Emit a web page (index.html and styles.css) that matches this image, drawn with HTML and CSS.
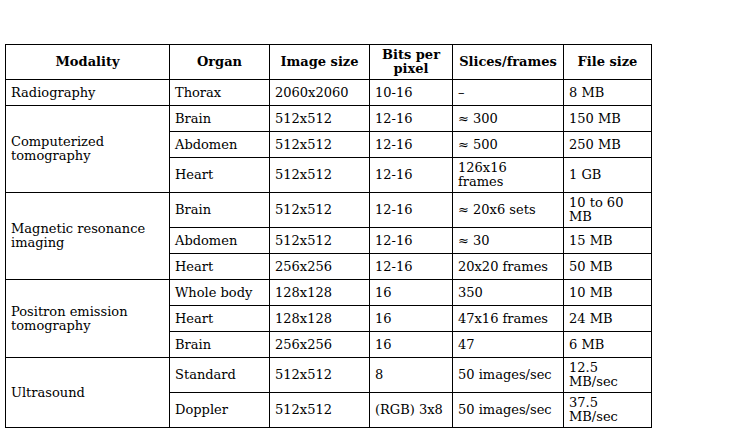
FILE: index.html
```html
<!DOCTYPE html>
<html>
<head>
<meta charset="utf-8">
<link rel="stylesheet" href="styles.css">
</head>
<body>
<div class="page">
<table class="grid">
<colgroup>
<col class="c1"><col class="c2"><col class="c3"><col class="c4"><col class="c5"><col class="c6">
</colgroup>
<thead>
<tr class="hrow">
<th>Modality</th><th>Organ</th><th>Image size</th><th>Bits per<br>pixel</th><th>Slices/frames</th><th>File size</th>
</tr>
</thead>
<tbody>
<tr class="s"><td>Radiography</td><td>Thorax</td><td>2060x2060</td><td>10-16</td><td>–</td><td>8 MB</td></tr>
<tr class="s"><td rowspan="3">Computerized<br>tomography</td><td>Brain</td><td>512x512</td><td>12-16</td><td>≈ 300</td><td>150 MB</td></tr>
<tr class="s"><td>Abdomen</td><td>512x512</td><td>12-16</td><td>≈ 500</td><td>250 MB</td></tr>
<tr class="d"><td>Heart</td><td>512x512</td><td>12-16</td><td>126x16<br>frames</td><td>1 GB</td></tr>
<tr class="d"><td rowspan="3">Magnetic resonance<br>imaging</td><td>Brain</td><td>512x512</td><td>12-16</td><td>≈ 20x6 sets</td><td>10 to 60<br>MB</td></tr>
<tr class="s"><td>Abdomen</td><td>512x512</td><td>12-16</td><td>≈ 30</td><td>15 MB</td></tr>
<tr class="s"><td>Heart</td><td>256x256</td><td>12-16</td><td>20x20 frames</td><td>50 MB</td></tr>
<tr class="s"><td rowspan="3">Positron emission<br>tomography</td><td>Whole body</td><td>128x128</td><td>16</td><td>350</td><td>10 MB</td></tr>
<tr class="s"><td>Heart</td><td>128x128</td><td>16</td><td>47x16 frames</td><td>24 MB</td></tr>
<tr class="s"><td>Brain</td><td>256x256</td><td>16</td><td>47</td><td>6 MB</td></tr>
<tr class="d"><td rowspan="2">Ultrasound</td><td>Standard</td><td>512x512</td><td>8</td><td>50 images/sec</td><td>12.5<br>MB/sec</td></tr>
<tr class="d"><td>Doppler</td><td>512x512</td><td>(RGB) 3x8</td><td>50 images/sec</td><td>37.5<br>MB/sec</td></tr>
</tbody>
</table>
</div>
</body>
</html>
```

FILE: styles.css
```css
html, body {
  margin: 0;
  padding: 0;
  background: #ffffff;
}
.page {
  padding: 44px 0 0 5px;
}
.grid {
  border-collapse: collapse;
  table-layout: fixed;
  width: 646px;
  font-family: "DejaVu Serif", serif;
  font-size: 13px;
  line-height: 14px;
  color: #000;
}
.c1 { width: 164px; }
.c2 { width: 100px; }
.c3 { width: 100px; }
.c4 { width: 83px; }
.c5 { width: 111px; }
.c6 { width: 88px; }
.grid th, .grid td {
  border: 1px solid #000;
  padding: 3px 5px;
  vertical-align: middle;
  text-align: left;
  white-space: nowrap;
}
.grid th {
  text-align: center;
  font-weight: bold;
}
.hrow th { height: 28px; }
.s td { height: 19px; }
.d td { height: 28px; }
```
